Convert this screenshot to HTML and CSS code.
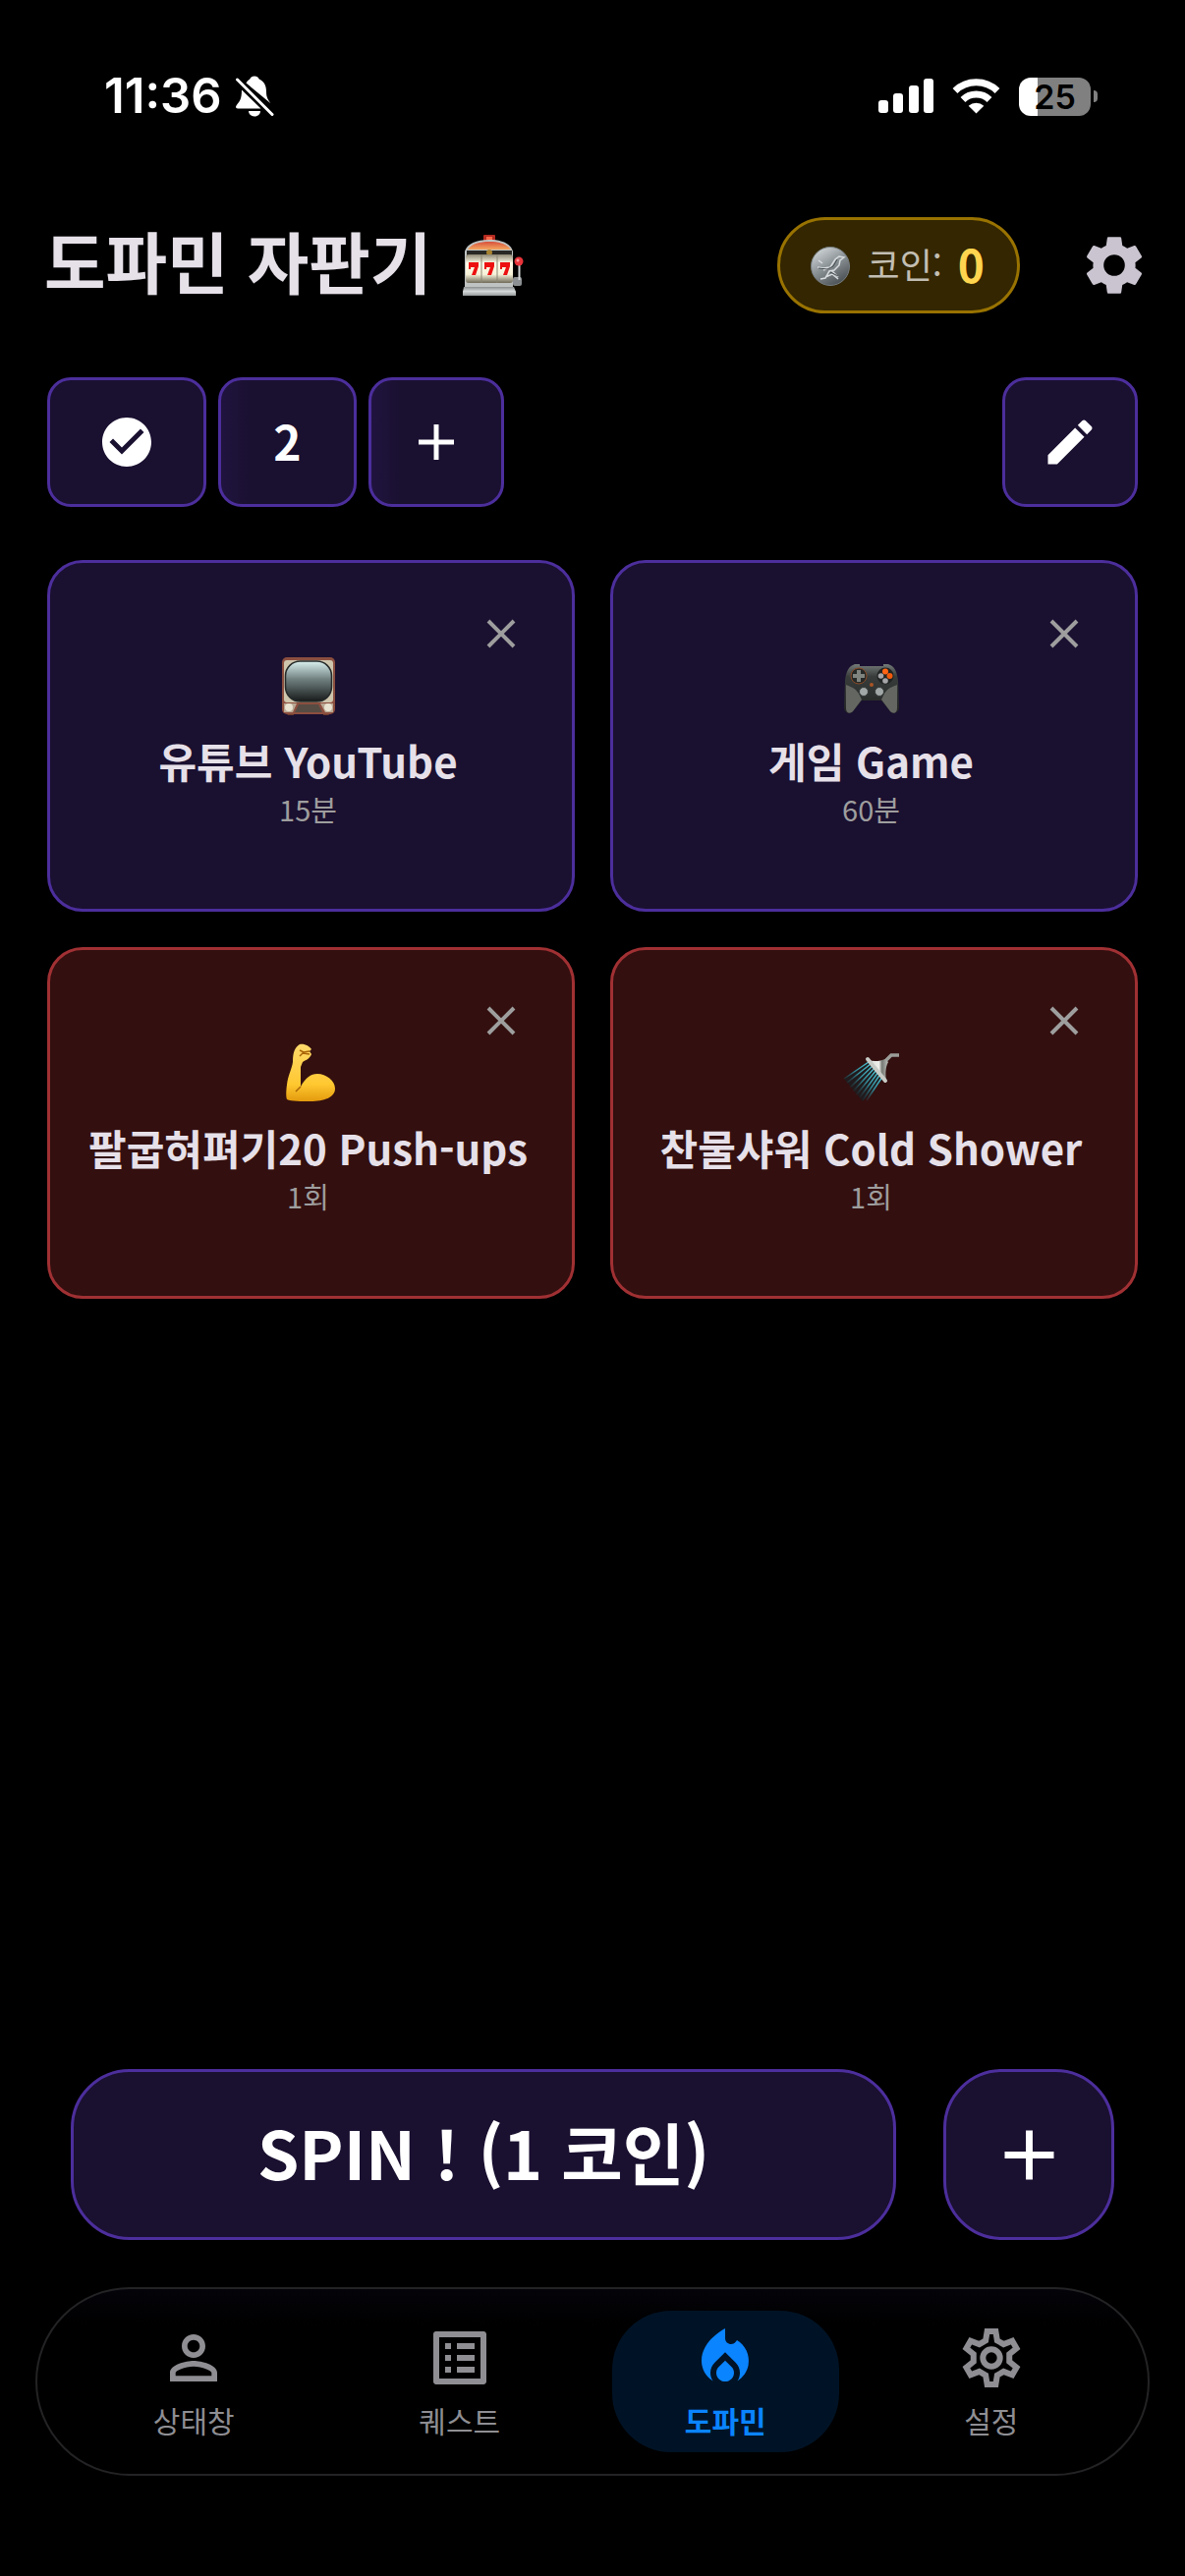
FILE: index.html
```html
<!DOCTYPE html>
<html lang="ko">
<head>
<meta charset="utf-8">
<meta name="viewport" content="width=device-width, initial-scale=1">
<title>도파민 자판기</title>
<link rel="stylesheet" href="styles.css">
</head>
<body>
<svg class="defs" aria-hidden="true">
  <defs>
    <symbol id="close" viewBox="0 0 24 24"><path d="M5.500 5.500l13 13M18.500 5.500l-13 13" fill="none" stroke="currentColor" stroke-width="2"/></symbol>
    <symbol id="plus" viewBox="0 0 24 24"><path d="M12 4v16M4 12h16" fill="none" stroke="currentColor" stroke-width="2.200"/></symbol>
  </defs>
</svg>

<div class="status">
  <div class="status-left">
    <span class="time">11:36</span>
    <svg class="bell" viewBox="0 0 40 42" fill="#fff" aria-hidden="true">
      <path d="M11.500 7.500C13 5 14.500 4.200 15.300 3.600 16 1.500 17.800.500 20 .500s4 1 4.700 3.100C30 6 32 10.500 32 16c0 6.500 2 8.500 4.500 12.200z"/>
      <path d="M7 14.500L26.500 33.500H3C1 33.500.500 31.700 1.700 30.200 4.500 26.500 7 24.500 7 14.500z"/>
      <path d="M14 36h12c0 3-2.500 5.500-6 5.500S14 39 14 36z"/>
      <path d="M2.500 4L38 39.500" stroke="#fff" stroke-width="3" stroke-linecap="round"/>
    </svg>
  </div>
  <div class="status-right">
    <svg class="signal" viewBox="0 0 56 36" fill="#fff" aria-hidden="true">
      <rect x="0" y="22" width="10" height="13" rx="3"/><rect x="15" y="15" width="10" height="20" rx="3"/><rect x="31" y="7" width="10" height="28" rx="3"/><rect x="46" y="0" width="10" height="35" rx="3"/>
    </svg>
    <svg class="wifi" viewBox="0 0 49 36" aria-hidden="true">
      <path d="M3 12.500a31 31 0 0 1 43 0" fill="none" stroke="#fff" stroke-width="7"/>
      <path d="M11 21.500a19.500 19.500 0 0 1 27 0" fill="none" stroke="#fff" stroke-width="7"/>
      <path d="M24.500 35.500l-7.800-7.800a11.500 11.500 0 0 1 15.600 0z" fill="#fff"/>
    </svg>
    <div class="battery"><span class="battery-body">25</span><span class="battery-tip"></span></div>
  </div>
</div>

<header class="header">
  <h1 class="title">도파민 자판기</h1>
  <svg class="slot" viewBox="0 0 62 62" aria-hidden="true">
    <defs>
      <linearGradient id="reel" x2="0" y2="1"><stop offset="0" stop-color="#8d8672"/><stop offset=".3" stop-color="#fffce8"/><stop offset=".7" stop-color="#f6f1d8"/><stop offset="1" stop-color="#6f6a58"/></linearGradient>
      <linearGradient id="dome" x2="0" y2="1"><stop offset="0" stop-color="#d8503c"/><stop offset="1" stop-color="#f4a860"/></linearGradient>
      <linearGradient id="base" x2="0" y2="1"><stop offset="0" stop-color="#8b8e8f"/><stop offset=".5" stop-color="#d6d9d9"/><stop offset="1" stop-color="#979a9a"/></linearGradient>
    </defs>
    <rect x="21" y="0" width="12" height="7" rx="1" fill="#b32a20"/><path d="M24 2h6v3h-6z" fill="#ff6a4a"/>
    <path d="M2 54V17C4 9 14 5 27 5s22 4 24 12v37z" fill="#bfc3c2"/>
    <path d="M5 15c4-6 12-8 22-8s18 2 22 8z" fill="url(#dome)"/>
    <rect x="4" y="16" width="46" height="5" fill="#292824"/><circle cx="27" cy="18" r="3" fill="#a88331"/>
    <rect x="3" y="20" width="48" height="29" rx="3" fill="url(#reel)"/>
    <path d="M19 20v29M35 20v29" stroke="#8a8573"/>
    <path d="M6 28h10v4l-3 9H9l3-8H8v2H6zM22 28h10v4l-3 9h-4l3-8h-4v2h-2zM38 28h10v4l-3 9h-4l3-8h-4v2h-2z" fill="#ed1010"/>
    <path d="M1 53h51l2 5v4H0v-4z" fill="url(#base)"/>
    <rect x="51" y="43" width="9" height="9" rx="2" fill="#8c9092"/>
    <path d="M57.500 28v18" stroke="#d2d4d5" stroke-width="2"/>
    <circle cx="57" cy="27" r="4.500" fill="#e8343a"/><circle cx="56" cy="26" r="1.500" fill="#ff999b"/>
  </svg>
  <div class="coins">
    <svg class="coin" viewBox="0 0 40 40" aria-hidden="true">
      <defs><linearGradient id="silver" x1=".2" x2=".8" y2="1"><stop offset="0" stop-color="#d3d8da"/><stop offset=".45" stop-color="#8d9498"/><stop offset="1" stop-color="#43494d"/></linearGradient></defs>
      <circle cx="20" cy="20" r="19.500" fill="url(#silver)" stroke="#777e82"/>
      <path d="M7 21l6 1 7-1 5-8 4-3 5 1-4 3-1 5-5 5-5 1-4 7-5 1M22 25l6 6M8 14l4 3M18 22l-5 2M15 31l7-3 6 5" fill="none" stroke="#d9dddf" stroke-width="1.500"/>
      <path d="M8 22l9 1 6-3 4-7M20 26l8 4" fill="none" stroke="#454c50"/>
    </svg>
    <span class="coin-label">코인:</span>
    <span class="coin-count">0</span>
  </div>
  <button class="settings" aria-label="설정">
    <svg viewBox="0 0 24 24" fill="currentColor"><path fill-rule="evenodd" d="M19.140 12.940c.04-.3.06-.61.06-.94 0-.32-.02-.64-.07-.94l2.030-1.580c.18-.14.23-.41.12-.61l-1.920-3.320c-.12-.22-.37-.29-.59-.22l-2.390.96c-.5-.38-1.030-.7-1.620-.94L14.400 2.810c-.04-.24-.24-.41-.48-.41h-3.840c-.24 0-.43.17-.47.41L9.250 5.350C8.660 5.590 8.120 5.920 7.630 6.290L5.240 5.330c-.22-.08-.47 0-.59.22L2.740 8.870c-.12.21-.08.47.12.61l2.030 1.580C4.840 11.360 4.800 11.690 4.800 12s.02.64.07.94l-2.030 1.580c-.18.14-.23.41-.12.61l1.920 3.320c.12.22.37.29.59.22l2.390-.96c.5.38 1.030.7 1.620.94l.36 2.540c.05.24.24.41.48.41h3.840c.24 0 .44-.17.47-.41l.36-2.540c.59-.24 1.130-.56 1.620-.94l2.390.96c.22.08.47 0 .59-.22l1.920-3.320c.12-.22.07-.47-.12-.61zM12 15.600A3.600 3.600 0 1 1 12 8.400a3.600 3.600 0 0 1 0 7.200z"/></svg>
  </button>
</header>

<main class="main">
  <div class="toolbar">
    <button class="chip chip-check" aria-label="선택"><svg viewBox="0 0 24 24" fill="currentColor"><path d="M12 2C6.480 2 2 6.480 2 12s4.480 10 10 10 10-4.480 10-10S17.520 2 12 2zm-2 15l-5-5 1.410-1.410L10 14.170l7.590-7.590L19 8l-9 9z"/></svg></button>
    <button class="chip chip-count">2</button>
    <button class="chip chip-add" aria-label="추가"><svg class="small-plus"><use href="#plus"/></svg></button>
    <button class="chip chip-edit" aria-label="편집"><svg viewBox="0 0 24 24" fill="currentColor"><path d="M3 17.250V21h3.750L17.810 9.940l-3.750-3.750L3 17.250zM20.710 7.040c.39-.39.39-1.020 0-1.410l-2.340-2.340c-.39-.39-1.020-.39-1.410 0l-1.830 1.830 3.750 3.750 1.830-1.830z"/></svg></button>
  </div>

  <section class="cards">
    <article class="card">
      <button class="close" aria-label="삭제"><svg><use href="#close"/></svg></button>
      <svg class="emoji" viewBox="0 0 60 60" aria-hidden="true">
        <defs><linearGradient id="screen" x2="0" y2="1"><stop offset="0" stop-color="#d9f1f0"/><stop offset=".45" stop-color="#70807f"/><stop offset="1" stop-color="#171a1a"/></linearGradient></defs>
        <path d="M8 57h7v4H9zM45 57h7l-2 4h-5z" fill="#6b3a2d"/>
        <rect x="3" y="1" width="54" height="58" rx="5" fill="#8c4f3f"/>
        <rect x="5" y="4" width="50" height="43" rx="3" fill="#cfc6ae"/>
        <rect x="6.500" y="5" width="47" height="41" rx="15" fill="url(#screen)" stroke="#252a29" stroke-width="1.500"/>
        <path d="M5 48h13l-4 9H5zM42 48h13v9h-8z" fill="#b9a893"/><path d="M20 49h20l4 8H16z" fill="#574c44"/>
        <circle cx="10" cy="52" r="4" fill="#e9e3d2"/><circle cx="50" cy="52" r="4" fill="#e9e3d2"/>
      </svg>
      <h2 class="card-title">유튜브 YouTube</h2>
      <p class="card-sub">15분</p>
    </article>

    <article class="card">
      <button class="close" aria-label="삭제"><svg><use href="#close"/></svg></button>
      <svg class="emoji" viewBox="0 0 60 60" aria-hidden="true">
        <defs><linearGradient id="pad" x2="0" y2="1"><stop offset="0" stop-color="#747a78"/><stop offset=".25" stop-color="#383d3b"/><stop offset="1" stop-color="#222523"/></linearGradient></defs>
        <path d="M13 8h5v2h24V8h5c6 2 9 7 10 17l1 27c0 6-7 8-10 3L40 45H20L12 55c-3 5-10 3-10-3l1-27C4 15 7 10 13 8z" fill="url(#pad)"/>
        <path d="M4 29c5 2 9 3 13 9l3 6-9 12c-3 3-7 2-7-3zM56 29c-5 2-9 3-13 9l-3 6 9 12c3 3 7 2 7-3z" fill="#646662"/>
        <circle cx="17" cy="20" r="8" fill="#252927" stroke="#8a4a28"/><path d="M15 14h4v4h4v4h-4v4h-4v-4h-4v-4h4z" fill="#80847f"/>
        <circle cx="44" cy="20" r="8.500" fill="#202422"/><circle cx="44" cy="15.500" r="3" fill="#ff6413"/><circle cx="48.500" cy="20" r="3" fill="#f05a0c"/><circle cx="39.500" cy="20" r="2.800" fill="#a5a5a8"/><circle cx="44" cy="25" r="2.800" fill="#a5a5a8"/>
        <circle cx="22" cy="36" r="4.500" fill="#a1a7a7" stroke="#353a38"/><circle cx="38" cy="36" r="4.500" fill="#a1a7a7" stroke="#353a38"/><circle cx="30" cy="29" r="2" fill="#a85425"/>
      </svg>
      <h2 class="card-title">게임 Game</h2>
      <p class="card-sub">60분</p>
    </article>

    <article class="card card-red">
      <button class="close" aria-label="삭제"><svg><use href="#close"/></svg></button>
      <svg class="emoji" viewBox="0 0 60 60" aria-hidden="true">
        <defs><linearGradient id="arm" x2="0" y2="1"><stop offset="0" stop-color="#ffd96b"/><stop offset=".7" stop-color="#ffc831"/><stop offset="1" stop-color="#e39a0d"/></linearGradient></defs>
        <path d="M21 1c5-1 10 2 12 5l-2 2 2 3c-2 5-6 6-9 8l-2 5v20c5-9 10-13 17-13 9 0 18 7 18 15 0 9-11 13-25 13-9 0-20 0-24-2-1-2-1-8 0-15 1-9 5-16 6-23 0-10 2-15 7-18z" fill="url(#arm)"/>
        <path d="M22 44l-5 5M31 8l-6 1-4-2M31 11l-7-1-3 3" fill="none" stroke="#a96508" stroke-width="1.500"/>
      </svg>
      <h2 class="card-title">팔굽혀펴기20 Push-ups</h2>
      <p class="card-sub">1회</p>
    </article>

    <article class="card card-red">
      <button class="close" aria-label="삭제"><svg><use href="#close"/></svg></button>
      <svg class="emoji" viewBox="0 0 60 60" aria-hidden="true">
        <defs>
          <linearGradient id="water" gradientUnits="userSpaceOnUse" x1="34" y1="24" x2="10" y2="50"><stop offset="0" stop-color="#4fc6d6"/><stop offset=".5" stop-color="#338997"/><stop offset="1" stop-color="#1c4c55" stop-opacity="0"/></linearGradient>
          <linearGradient id="metal"><stop offset="0" stop-color="#dedfdb"/><stop offset=".55" stop-color="#eeeeea"/><stop offset=".7" stop-color="#767874"/><stop offset="1" stop-color="#bec0bb"/></linearGradient>
        </defs>
        <path d="M27 18L2 36 21 59 42 36z" fill="#102629" opacity=".5"/>
        <path d="M27 19L2 36M29 21L5 40M31 23L8 45M33 25L11 49M35 27L14 53M37 29L18 55M39 31L21 58M41 34L25 58" stroke="url(#water)" stroke-width="1.500"/>
        <path d="M58 12h-8l-8 8" fill="none" stroke="#9b9d99" stroke-width="3.500"/>
        <path d="M26 17c7 2 13 1 18-1l3 3c-3 5-3 13-2 19z" fill="url(#metal)"/>
        <path d="M26 16L44 38" stroke="#c9cbc7" stroke-width="4" stroke-linecap="round"/>
      </svg>
      <h2 class="card-title">찬물샤워 Cold Shower</h2>
      <p class="card-sub">1회</p>
    </article>
  </section>
</main>

<div class="actions">
  <button class="action spin">SPIN ! (1 코인)</button>
  <button class="action add" aria-label="코인 추가"><svg><use href="#plus"/></svg></button>
</div>

<nav class="nav">
  <a class="tab" href="#status"><svg viewBox="0 0 24 24" fill="currentColor"><path d="M12 5.900c1.160 0 2.100.94 2.100 2.100s-.94 2.100-2.100 2.100S9.900 9.160 9.900 8s.94-2.100 2.100-2.100m0 9c2.970 0 6.100 1.460 6.100 2.100v1.100H5.900V17c0-.64 3.130-2.100 6.100-2.100M12 4C9.790 4 8 5.790 8 8s1.790 4 4 4 4-1.790 4-4-1.790-4-4-4zm0 9c-2.670 0-8 1.340-8 4v3h16v-3c0-2.660-5.330-4-8-4z"/></svg>상태창</a>
  <a class="tab" href="#quest"><svg viewBox="0 0 24 24" fill="currentColor"><path d="M19 5v14H5V5h14m1.100-2H3.900c-.5 0-.9.4-.9.9v16.200c0 .4.4.9.9.9h16.200c.4 0 .9-.5.9-.9V3.900c0-.5-.5-.9-.9-.9zM11 7h6v2h-6V7zm0 4h6v2h-6v-2zm0 4h6v2h-6zM7 7h2v2H7zm0 4h2v2H7zm0 4h2v2H7z"/></svg>퀘스트</a>
  <a class="tab tab-active" href="#dopamine" aria-current="page"><svg viewBox="0 0 24 24" fill="currentColor"><path d="M16 6l-.44.55C14.380 8.020 12 7.190 12 5.300V2S4 6 4 13c0 2.920 1.560 5.470 3.890 6.860-.56-.79-.89-1.760-.89-2.800 0-1.320.52-2.560 1.470-3.500L12 10.100l3.530 3.470c.95.93 1.470 2.170 1.470 3.500 0 1.020-.31 1.960-.85 2.750 1.890-1.150 3.290-3.060 3.710-5.300.66-3.550-1.070-6.900-3.860-8.520zM12 12.900l-2.130 2.090C9.310 15.550 9 16.280 9 17.060 9 18.680 10.350 20 12 20s3-1.320 3-2.940c0-.78-.31-1.520-.87-2.070L12 12.900z"/></svg>도파민</a>
  <a class="tab" href="#settings"><svg viewBox="-12 -12 24 24" fill="none" stroke="currentColor" stroke-width="2"><path d="M-1.950-5.900L-1.450-9H1.450L1.950-5.900 4.130-4.640 7.070-5.760 8.520-3.240 6.080-1.260V1.260L8.520 3.240 7.070 5.760 4.130 4.640 1.950 5.900 1.450 9H-1.450L-1.950 5.900-4.130 4.640-7.070 5.760-8.520 3.240-6.080 1.260V-1.260L-8.520-3.240-7.070-5.760-4.130-4.640z"/><circle r="2.900"/></svg>설정</a>
</nav>
</body>
</html>
```
FILE: styles.css
```css
* { box-sizing: border-box; }

body {
  margin: 0;
  min-height: 100vh;
  display: flex;
  flex-direction: column;
  background: #000;
  color: #e6e0e9;
  font-family: "Noto Sans CJK KR", "Noto Sans", sans-serif;
  font-weight: 700;
}

h1, h2, p { margin: 0; }
button { font: inherit; color: inherit; background: none; border: 0; padding: 0; cursor: pointer; }
svg { display: block; flex: none; }
.defs { position: absolute; width: 0; height: 0; }

/* Device status bar */
.status {
  height: 198px;
  padding: 68px 89px 0 106px;
  display: flex;
  justify-content: space-between;
  align-items: flex-start;
  color: #fff;
  font-family: Inter, sans-serif;
}
.status-left, .status-right { display: flex; align-items: center; height: 60px; }
.status-left { gap: 13px; }
.status-right { gap: 19px; }
.time { font-size: 49px; font-weight: 600; line-height: 60px; }
.bell { width: 40px; height: 42px; }
.signal { width: 56px; height: 36px; }
.wifi { width: 49px; height: 36px; }
.battery { display: flex; align-items: center; gap: 3px; }
.battery-body {
  width: 73px;
  height: 39px;
  border-radius: 12px;
  background: linear-gradient(90deg, #fff 26%, #808080 26%);
  color: #000;
  font-size: 34px;
  font-weight: 600;
  line-height: 39px;
  text-align: center;
}
.battery-tip { width: 4px; height: 12px; border-radius: 0 6px 6px 0; background: #808080; }

/* Title row */
.header { display: flex; align-items: center; height: 144px; padding-left: 45px; }
.title { padding-bottom: 10px; font-size: 68px; line-height: 84px; white-space: nowrap; }
.slot { width: 62px; height: 62px; margin-left: 32px; }
.coins {
  display: flex;
  align-items: center;
  height: 98px;
  margin-left: auto;
  padding: 0 33px 4px 31px;
  border: 3px solid #997300;
  border-radius: 49px;
  background: #332600;
}
.coin { width: 40px; height: 40px; margin-top: 6px; margin-right: 18px; }
.coin-label { font-size: 36px; line-height: 48px; font-weight: 400; color: #c2beb3; }
.coin-count { margin-left: 16px; font-size: 46px; line-height: 48px; color: #ffd54f; }
.settings { display: grid; place-items: center; width: 144px; height: 144px; margin-left: 24px; color: #cac4d0; }
.settings svg { width: 72px; height: 72px; }

.main { flex: 1; padding: 42px 48px 0; }

/* Selection toolbar */
.toolbar { display: flex; gap: 12px; margin-bottom: 54px; }
.chip {
  display: grid;
  place-items: center;
  width: 138px;
  height: 132px;
  border: 3px solid #4c2e9c;
  border-radius: 24px;
  background: #1a1030;
  color: #fff;
  font-size: 48px;
}
.chip svg { width: 60px; height: 60px; }
.chip .small-plus { width: 54px; height: 54px; }
.chip-check { width: 162px; }
.chip-count { width: 141px; padding-bottom: 4px; }
.chip-count, .chip-add { background: linear-gradient(90deg, #20143f, #1a1030 22%); }
.chip-edit { margin-left: auto; }

/* Reward and penalty cards */
.cards { display: grid; grid-template-columns: 1fr 1fr; gap: 36px; }
.card {
  position: relative;
  display: flex;
  flex-direction: column;
  align-items: center;
  padding: 95px 24px 81px 18px;
  border: 3px solid #4c2e9c;
  border-radius: 36px;
  background: #1a1030;
}
.card-red { border-color: #a03033; background: #330f0f; }
.close { position: absolute; top: 45px; right: 45px; width: 54px; height: 54px; color: #9e9e9e; display: grid; place-items: center; }
.close svg { width: 48px; height: 48px; }
.emoji { width: 60px; height: 60px; margin-bottom: 18px; }
.card-title { font-size: 42px; line-height: 56px; white-space: nowrap; }
.card-sub { font-size: 29px; line-height: 42px; font-weight: 400; color: #9e9e9e; }

/* Spin row */
.actions { display: flex; gap: 48px; padding: 0 72px; margin-bottom: 48px; }
.action {
  display: grid;
  place-items: center;
  height: 174px;
  border: 3px solid #4c2e9c;
  border-radius: 60px;
  background: #1a1030;
  color: #fff;
}
.spin { flex: 1; padding-bottom: 8px; font-size: 68px; }
.add { width: 174px; }
.add svg { width: 75px; height: 75px; }

/* Bottom tabs */
.nav {
  display: grid;
  grid-template-columns: repeat(4, 1fr);
  gap: 40px;
  margin: 0 36px 102px;
  padding: 22px 44px;
  border: 2px solid #232325;
  border-radius: 96px;
  background: linear-gradient(#040309, #000 20%);
}
.tab {
  display: flex;
  flex-direction: column;
  align-items: center;
  padding: 12px 0 0;
  height: 144px;
  border-radius: 60px;
  color: #8e8e93;
  font-size: 30px;
  font-weight: 400;
  line-height: 54px;
  text-decoration: none;
}
.tab svg { width: 72px; height: 72px; }
.tab-active { background: #001326; color: #0a84ff; font-weight: 700; }
```
